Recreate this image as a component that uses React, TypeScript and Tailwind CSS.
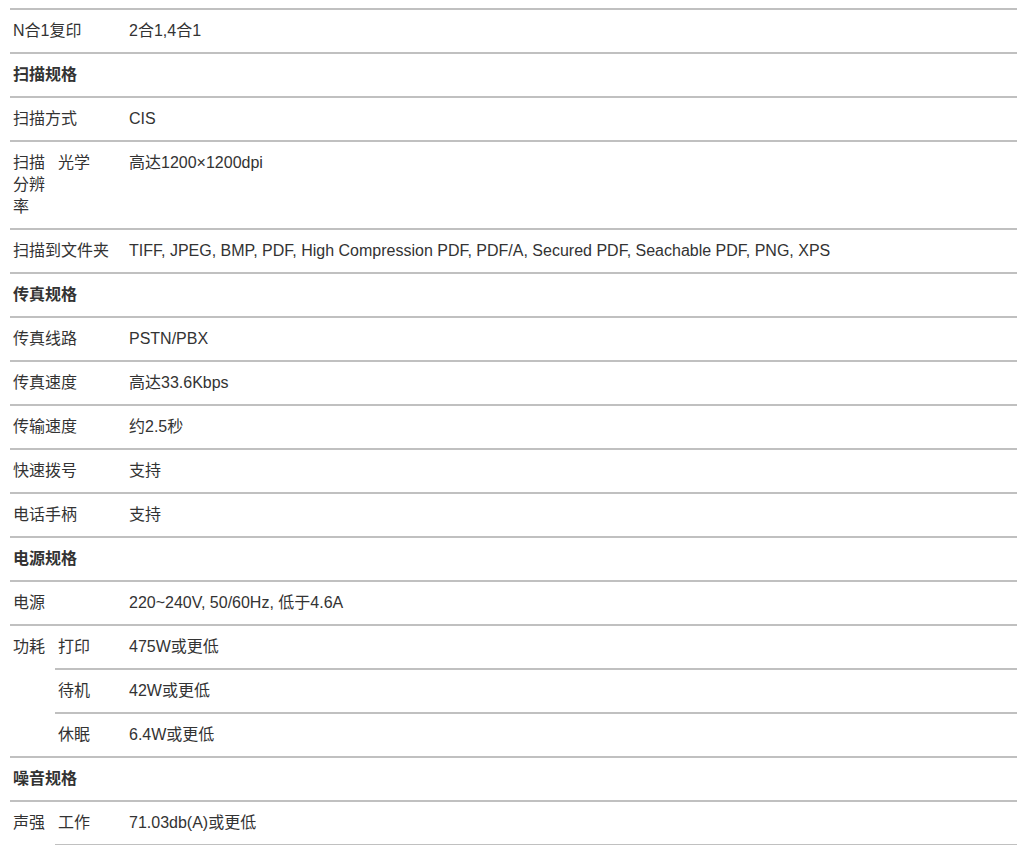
import React from "react";

const cell = "border-t-2 border-[#c0c0c0] pl-[3px] pr-[3px] py-[10px] align-top text-left";

type Row =
  | { kind: "head"; text: string }
  | { kind: "plain"; label: string; value: string }
  | { kind: "group"; label: string; sub: { label: string; value: string }[]; lastBottom?: boolean };

const rows: Row[] = [
  { kind: "plain", label: "N合1复印", value: "2合1,4合1" },
  { kind: "head", text: "扫描规格" },
  { kind: "plain", label: "扫描方式", value: "CIS" },
  { kind: "group", label: "扫描分辨率", sub: [{ label: "光学", value: "高达1200×1200dpi" }] },
  {
    kind: "plain",
    label: "扫描到文件夹",
    value: "TIFF, JPEG, BMP, PDF, High Compression PDF, PDF/A, Secured PDF, Seachable PDF, PNG, XPS",
  },
  { kind: "head", text: "传真规格" },
  { kind: "plain", label: "传真线路", value: "PSTN/PBX" },
  { kind: "plain", label: "传真速度", value: "高达33.6Kbps" },
  { kind: "plain", label: "传输速度", value: "约2.5秒" },
  { kind: "plain", label: "快速拨号", value: "支持" },
  { kind: "plain", label: "电话手柄", value: "支持" },
  { kind: "head", text: "电源规格" },
  { kind: "plain", label: "电源", value: "220~240V, 50/60Hz, 低于4.6A" },
  {
    kind: "group",
    label: "功耗",
    sub: [
      { label: "打印", value: "475W或更低" },
      { label: "待机", value: "42W或更低" },
      { label: "休眠", value: "6.4W或更低" },
    ],
  },
  { kind: "head", text: "噪音规格" },
  { kind: "group", label: "声强", sub: [{ label: "工作", value: "71.03db(A)或更低" }], lastBottom: true },
];

export default function App() {
  return (
    <div
      className="min-h-screen bg-white pt-[8px] pl-[10px] pr-[9px] text-[#333333] text-[16px] leading-[22px]"
      style={{ fontFamily: '"Liberation Sans", Arial, "Noto Sans CJK SC", sans-serif' }}
    >
      <table className="w-full table-fixed border-collapse">
        <colgroup>
          <col className="w-[45px]" />
          <col className="w-[71px]" />
          <col />
        </colgroup>
        <tbody>
          {rows.map((r, i) => {
            if (r.kind === "head") {
              return (
                <tr key={i}>
                  <td colSpan={3} className={`${cell} font-bold`}>
                    {r.text}
                  </td>
                </tr>
              );
            }
            if (r.kind === "plain") {
              return (
                <tr key={i}>
                  <td colSpan={2} className={`${cell} whitespace-nowrap`}>
                    {r.label}
                  </td>
                  <td className={cell}>{r.value}</td>
                </tr>
              );
            }
            return r.sub.map((s, j) => {
              const bottom = r.lastBottom && j === r.sub.length - 1 ? " border-b-2" : "";
              return (
                <tr key={`${i}-${j}`}>
                  {j === 0 && (
                    <td rowSpan={r.sub.length} className={`${cell} break-all`}>
                      {r.label}
                    </td>
                  )}
                  <td className={`${cell}${bottom} whitespace-nowrap`}>{s.label}</td>
                  <td className={`${cell}${bottom}`}>{s.value}</td>
                </tr>
              );
            });
          })}
        </tbody>
      </table>
    </div>
  );
}
